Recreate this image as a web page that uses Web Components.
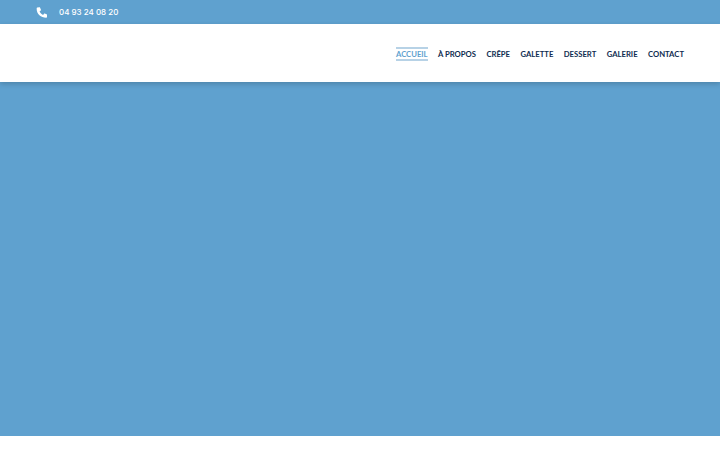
<!DOCTYPE html>
<html lang="fr">
<head>
<meta charset="utf-8">
<title>Accueil</title>
<style>
  html, body { margin: 0; padding: 0; background: #fff; }
  body { font-family: "Inter", "Noto Sans", sans-serif; height: 450px; overflow: hidden; }
</style>
</head>
<body>
<site-top-bar phone="04 93 24 08 20"></site-top-bar>
<site-header>
  <site-nav-link active>ACCUEIL</site-nav-link>
  <site-nav-link>À PROPOS</site-nav-link>
  <site-nav-link>CRÊPE</site-nav-link>
  <site-nav-link>GALETTE</site-nav-link>
  <site-nav-link>DESSERT</site-nav-link>
  <site-nav-link>GALERIE</site-nav-link>
  <site-nav-link>CONTACT</site-nav-link>
</site-header>
<site-hero></site-hero>

<script>
class SiteTopBar extends HTMLElement {
  constructor() {
    super();
    this.attachShadow({ mode: 'open' });
    this.shadow = this.shadowRoot;
    this.shadow.innerHTML = `
      <style>
        :host { display: flex; align-items: center; height: 24px; padding-left: 36px; gap: 12px; background: #5fa1cf; color: #fff; font-size: 8px; font-weight: 500; }
        svg { width: 11px; height: 11px; display: block; fill: #fff; }
      </style>
      <svg viewBox="2 0 22 22"><path d="M4.600 1.200 8.600.3c.6-.1 1.200.2 1.400.8l1.900 4.400c.2.500.1 1.100-.4 1.500L9.100 9c1.500 3.100 3.900 5.600 7 7l2-2.400c.4-.5 1-.6 1.500-.4l4.400 1.900c.6.300.9.900.8 1.500l-1 4.100c-.1.600-.7 1-1.300 1C11.200 21.700 2.400 13 3.400 2.500c0-.6.500-1.200 1.200-1.300Z"/></svg>
      <span></span>`;
    this.shadow.querySelector('span').textContent = this.getAttribute('phone');
  }
}

class SiteHeader extends HTMLElement {
  constructor() {
    super();
    this.attachShadow({ mode: 'open' }).innerHTML = `
      <style>
        :host { display: flex; justify-content: flex-end; align-items: center; position: relative; z-index: 1; height: 58px; padding-right: 36px; gap: 10.4px; box-sizing: border-box; background: #fff; box-shadow: 0 2px 5px rgba(0, 0, 0, .18); }
      </style>
      <slot></slot>`;
  }
}

class SiteNavLink extends HTMLElement {
  constructor() {
    super();
    this.attachShadow({ mode: 'open' }).innerHTML = `
      <style>
        :host { display: block; margin-top: 2px; border-top: 2px solid transparent; border-bottom: 2px solid transparent; color: #0e2c50; font-family: "Lato", "Inter", sans-serif; font-size: 7.7px; line-height: 10px; font-weight: 700; white-space: nowrap; }
        :host([active]) { color: #5fa1cf; border-color: #b7d2e6; }
      </style>
      <slot></slot>`;
  }
}

class SiteHero extends HTMLElement {
  constructor() {
    super();
    this.attachShadow({ mode: 'open' }).innerHTML = `
      <style>
        :host { display: block; height: 354px; background: #5fa1cf; }
      </style>`;
  }
}

customElements.define('site-top-bar', SiteTopBar);
customElements.define('site-header', SiteHeader);
customElements.define('site-nav-link', SiteNavLink);
customElements.define('site-hero', SiteHero);
</script>
</body>
</html>
